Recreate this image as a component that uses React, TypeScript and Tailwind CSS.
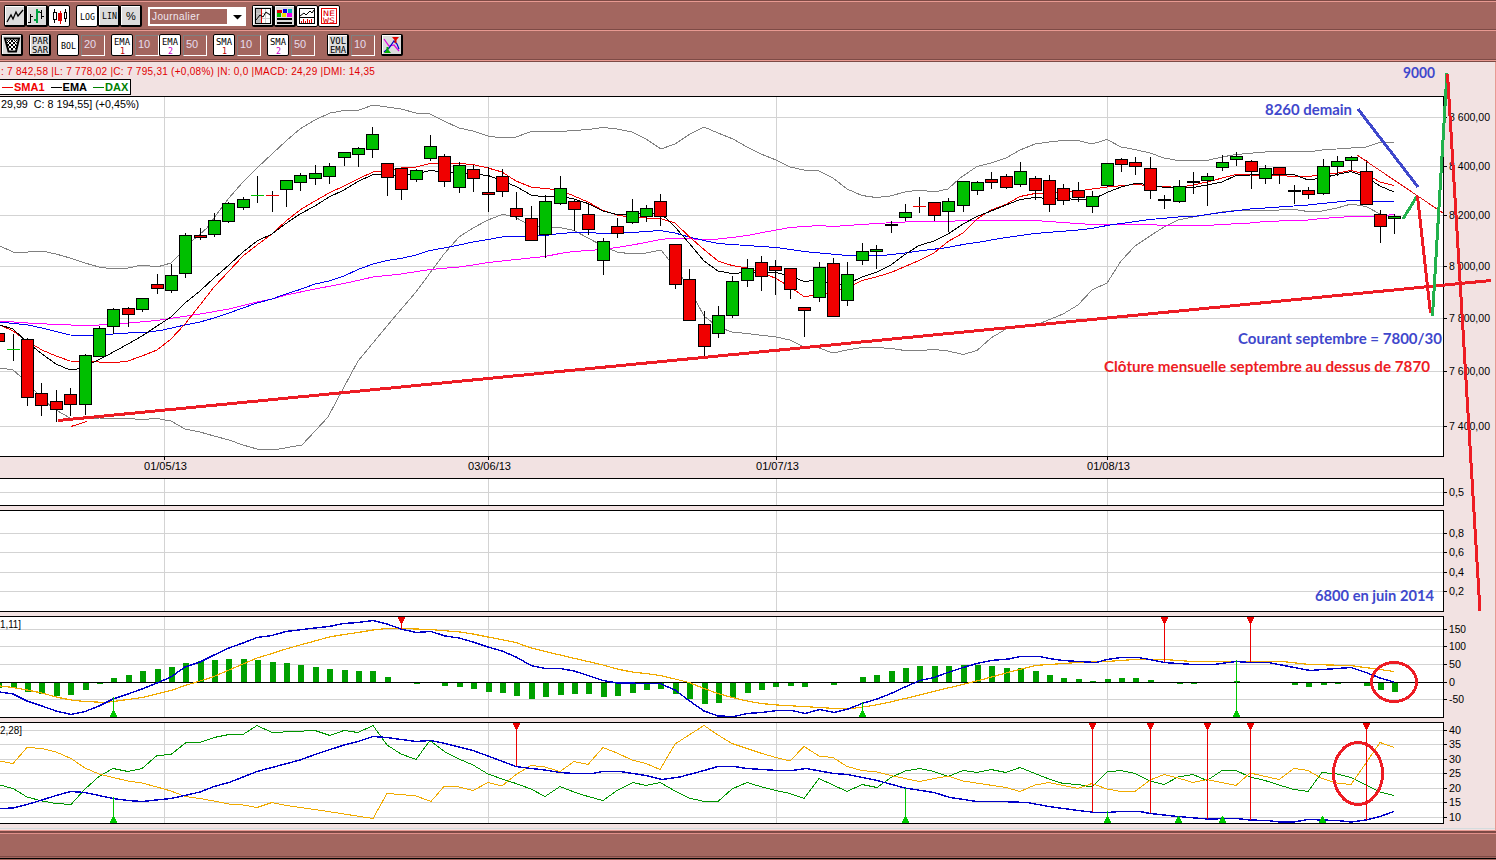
import type { ReactNode } from 'react';

const C = {
  up: '#00bf00',
  down: '#f00000',
  grid: '#d3d3d3',
  bar: '#00a000',
  orange: '#f0aa00',
  blue: '#0000c8',
  green: '#009600',
  marker: '#00c800',
  pen: '#ed1c24',
  ink: '#3f48cc',
  leaf: '#22b14c',
};

const FONT = '"Liberation Sans", Arial, sans-serif';

// x of the n-th trading day
const dayX = (n: number) => Math.floor(13.06 + 14.395 * n);

// one row per day: kind, body top, body bottom, wick high, wick low
// g / r = filled candle, G / R / K = flat cross
type Candle = [string, number, number, number, number];
const candles: Candle[] = [
  ['r', 333, 342, 333, 342], ['G', 349, 350, 334, 361], ['r', 339, 398, 338, 406], ['r', 393, 406, 383, 416],
  ['r', 401, 410, 390, 422], ['r', 394, 405, 388, 416], ['g', 355, 405, 354, 415], ['g', 328, 357, 326, 357],
  ['g', 309, 327, 308, 334], ['r', 308, 315, 307, 327], ['g', 298, 310, 298, 312], ['r', 284, 289, 274, 294],
  ['g', 275, 291, 264, 293], ['g', 235, 274, 233, 278], ['r', 235, 238, 228, 240], ['g', 220, 235, 213, 237],
  ['g', 203, 222, 202, 223], ['g', 199, 208, 197, 210], ['G', 195, 196, 176, 203], ['R', 195, 196, 191, 212],
  ['g', 180, 190, 180, 207], ['g', 175, 183, 173, 191], ['g', 173, 179, 165, 185], ['g', 166, 177, 163, 184],
  ['g', 152, 158, 152, 166], ['g', 148, 155, 147, 167], ['g', 134, 150, 127, 158], ['r', 163, 178, 163, 196],
  ['r', 168, 190, 168, 200], ['g', 170, 180, 169, 182], ['g', 146, 159, 135, 161], ['r', 156, 182, 154, 187],
  ['g', 165, 188, 162, 193], ['r', 169, 179, 165, 192], ['r', 192, 195, 167, 212], ['r', 176, 192, 169, 197],
  ['r', 208, 217, 192, 220], ['r', 218, 241, 206, 241], ['g', 201, 235, 195, 258], ['g', 188, 204, 176, 205],
  ['r', 201, 210, 200, 231], ['r', 214, 230, 204, 235], ['g', 241, 261, 238, 275], ['r', 226, 234, 218, 238],
  ['g', 211, 223, 199, 224], ['g', 208, 217, 205, 222], ['r', 201, 217, 194, 226], ['r', 244, 285, 244, 289],
  ['r', 279, 321, 269, 321], ['r', 324, 347, 311, 357], ['g', 315, 334, 306, 338], ['g', 281, 316, 276, 318],
  ['g', 268, 281, 259, 287], ['r', 262, 277, 256, 291], ['r', 266, 271, 260, 295], ['r', 268, 290, 268, 299],
  ['r', 307, 311, 307, 337], ['g', 267, 298, 262, 302], ['r', 263, 317, 258, 317], ['g', 274, 301, 262, 306],
  ['g', 251, 261, 243, 265], ['g', 249, 252, 245, 269], ['K', 224, 226, 221, 233], ['g', 212, 218, 204, 221],
  ['R', 206, 207, 197, 213], ['r', 202, 216, 202, 221], ['g', 201, 212, 198, 232], ['g', 181, 206, 181, 212],
  ['g', 182, 191, 181, 195], ['r', 179, 183, 172, 189], ['r', 176, 188, 174, 189], ['g', 171, 185, 162, 187],
  ['r', 178, 191, 176, 200], ['r', 180, 205, 175, 212], ['r', 188, 201, 184, 205], ['r', 190, 198, 182, 202],
  ['g', 196, 207, 191, 213], ['g', 163, 186, 163, 187], ['r', 159, 165, 158, 172], ['r', 162, 167, 157, 175],
  ['r', 168, 191, 157, 199], ['K', 199, 201, 195, 209], ['g', 186, 202, 180, 203], ['K', 181, 183, 172, 194],
  ['g', 176, 181, 173, 206], ['g', 162, 168, 155, 171], ['g', 156, 160, 152, 166], ['r', 161, 172, 160, 189],
  ['g', 168, 179, 165, 184], ['r', 167, 175, 167, 184], ['K', 190, 192, 185, 204], ['r', 190, 195, 187, 199],
  ['g', 166, 194, 159, 195], ['g', 161, 167, 156, 176], ['g', 157, 161, 156, 170], ['r', 171, 205, 160, 205],
  ['r', 214, 227, 210, 243], ['g', 216, 219, 214, 234],
];

const upperBand = '0,246 13,252 28,252 42,251 56,254 70,258 85,263 99,267 113,269 128,268 142,265 157,267 171,263 180,254 192,241 207,228 214,218 229,198 243,182 257,168 272,154 286,141 300,129 315,120 330,113 344,110.5 358,110.5 373,105 387,107 401,109 416,113 430,114 444,121 459,128 473,131 488,136 502,138 516,137 531,131.5 560,131.5 588,129.5 603,127.5 617,129 632,132 646,139 661,149 675,144 690,134 704,127 718,133 733,139 747,147 761,154 776,160 790,167 804,170 819,171 833,178 847,189 862,195.5 876,197.5 890,196 905,192 919,190 934,192 948,189 960,178 977,166.5 991,163 1006,158 1020,150 1035,144 1049,142 1063,140.5 1078,140.5 1092,144 1107,139.5 1121,147 1135,149.5 1150,153 1164,158 1178,160.5 1207,160.5 1222,157 1236,154.5 1265,152 1294,151 1308,152 1322,150 1366,147 1380,142.5 1394,142.5';
const lowerBand = '0,368 13,370 27,382 42,399 56,410 70,418 85,419 99,418 128,418.5 142,419.5 157,418.5 171,421 185,429 200,432 214,436 229,440 243,445 257,449 279,449 302,445 316,430 328,417 344,387 358,361 392,320 416,292 430,273 444,254 459,237 473,228 488,220 502,214.5 513,216 531,226 545,227.5 560,227.5 574,230.5 588,238 603,246 617,252 632,254 646,253 661,250 669,260 682,277 697,303 704,316 718,327 732,332 747,333.5 776,337 790,340 804,347 819,348 833,353 847,350 862,347.5 876,347.5 891,348.5 905,350.5 920,350.5 934,349.5 948,351 963,354.5 977,350.5 991,338 1006,329 1020,327 1041,323 1063,314 1078,305 1092,290 1107,283 1121,261 1135,246 1150,236 1164,227 1178,220 1193,217 1222,212 1236,210.5 1265,210.5 1294,209.5 1308,211.5 1322,211 1337,208 1351,204 1366,206.5 1380,214';
const ema50 = '0,322 28,325 42,328 70,335 100,335.5 113,334 128,333 149,332 163,330 185,325 200,322 214,318 229,313 257,303 272,299 286,294 300,289.5 315,284 329,281 344,276 358,269.5 373,264 387,260.5 401,258.5 416,255 430,250.5 444,248 459,245 473,242 488,239.5 502,237 516,236.5 530,236.5 545,235.5 560,233.5 574,232.5 588,232.5 603,233.5 632,232.5 646,231.5 660,230.5 675,233 689,237 704,240.5 718,243.5 732,244.5 776,247.5 804,251.5 847,255.5 882,255.5 905,253 919,251 948,247.5 963,244.5 977,242.5 1006,237.5 1035,233.5 1078,230 1092,228.5 1107,225.5 1121,223.5 1150,219.5 1178,217 1193,216.5 1222,212.5 1250,209 1265,208 1308,205 1322,203.5 1337,202 1351,200.5 1366,200.5 1380,201.5 1394,201.5';
const sma50 = '0,321 28,323 56,324.5 85,325.5 113,324.5 157,320.5 200,314 229,309 257,302 272,299 286,295 315,289 344,283.5 373,277 401,274 430,269.5 459,267 473,265 488,262.5 516,259.5 545,256.5 560,253.5 574,251.5 588,250.5 603,249.5 617,247.5 632,245 646,242.5 660,239.5 675,238 704,239.5 718,239 732,237.5 747,235.5 776,230 790,227.5 819,225.5 833,226.5 847,225.5 862,224.5 876,223.5 905,222 919,221.5 948,221.5 963,220.5 1035,220.5 1063,222.5 1092,224.5 1150,224.5 1164,225.5 1207,225.5 1222,224.5 1250,223 1265,221.5 1308,220 1322,218.5 1351,216.5 1375,216.5 1384,215.5 1394,214.5';
const ema10 = '0,325 13,329 27,342 42,354 56,364 70,370 77,369 92,363 106,356 128,344 142,336 157,326 171,317 185,303 200,291 214,278 229,265 243,252 257,241 272,234 286,223.5 300,214 315,206 329,197 344,190 358,181.5 373,174.5 387,174.5 401,176 416,174 430,170.5 444,172 459,173 473,174 488,175.5 495,178 516,186.5 531,195 545,197 560,196 574,199 588,203.5 603,211 617,214.5 646,213.5 660,213.5 667,219 675,227 689,243 704,261 718,271 732,273.5 747,272.5 776,272.5 790,276 804,281.5 819,280 833,284 847,284 862,277 876,272.5 891,265 905,254.5 919,245.5 934,241 948,234 963,224 977,216.5 991,211 1006,205 1020,199.5 1035,197.5 1049,198.5 1092,199.5 1107,192.5 1121,187 1135,183.5 1150,184.5 1164,187.5 1193,187.5 1207,185 1222,182 1236,175.5 1265,174.5 1294,174.5 1308,180 1322,178 1337,174.5 1351,171.5 1366,177 1380,186 1394,192';
const sma10 = '0,325 13,331 27,341 42,350 56,356 70,361 92,361.5 113,363 128,361 142,356 157,350 171,339 185,324 200,305 214,287 229,271 243,256 257,245 272,234 286,221 300,210 315,201 329,193 344,186 358,179 373,172 387,171 401,168 416,167 430,163.5 459,163.5 473,164.5 488,168 502,172 516,181 531,187 545,188.5 560,190 574,196 588,202 603,210.5 617,215 632,217.5 660,218.5 675,223 689,236.5 704,249.5 718,261 732,265.5 747,268 761,272 776,278.5 790,287 804,296.5 819,295 833,292 847,288 862,280.5 876,277 891,272.5 905,266.5 919,260.5 934,253 948,241.5 963,233 977,219 991,210 1006,204.5 1020,196.5 1035,193.5 1049,193 1078,191 1107,187 1135,184.5 1178,187.5 1193,185 1207,182 1236,174.5 1265,175.5 1308,176.5 1337,173 1351,170.5 1366,174 1380,182 1394,185.5';

const macdLine = '0,692 13,694 27,701 42,706 56,711 71,714.5 85,711.5 99,706 113,699 128,694 142,689 157,683 171,677 185,667 200,662 214,655 229,648 243,643 257,637.5 272,635.5 286,631.5 315,628 329,626.5 344,623.5 358,622.5 373,620.5 387,624 401,629 416,632.5 431,631.5 445,636 459,638 473,642 488,647 502,651 516,657 531,665.5 545,668.5 560,668.5 574,671 588,675.5 603,680.5 617,683 660,683.5 675,690 689,700.5 704,711 718,716 734,716.5 747,713.5 762,712.5 777,710.5 792,710.5 805,713.5 820,709.5 834,712.5 848,709 862,703.5 877,699 891,693.5 905,687 920,680.5 934,677.5 948,672.5 963,667.5 977,663.5 991,660.5 1009,659 1020,656.5 1040,656.5 1049,658.5 1063,660.5 1078,661.5 1096,662.5 1107,659.5 1121,657.5 1138,657.5 1150,659.5 1164,662.5 1178,663.5 1193,664.5 1214,664.5 1236,661.5 1250,662.5 1268,662.5 1279,664.5 1294,667.5 1310,670.5 1337,668.5 1351,667.5 1366,672.5 1380,678 1394,682';
const macdSignal = '0,686 13,687.5 27,690 42,693 56,697 71,700 85,701.5 106,702.5 128,699.5 142,697.5 157,694 171,690.5 185,685.5 200,681 214,676.5 229,670 243,664 257,658 272,653.5 286,649 300,645 315,641 329,637 344,634.5 358,632.5 373,630 387,628.5 401,628.5 430,629.5 460,632 473,634 488,637 516,642.5 531,648 545,651.5 560,655 588,661.5 603,665 617,669 632,672 646,673.5 660,675.5 675,679 689,682.5 704,688.5 718,693.5 732,697.5 747,701 761,703.5 777,705 820,707.5 834,708.5 852,708.5 870,706 891,702 905,698.5 920,695 948,688 977,681 1006,673 1020,669.5 1035,665.5 1049,664.5 1078,662.5 1107,661.5 1135,659.5 1164,659.5 1193,661.5 1282,661.5 1310,664.5 1350,665.5 1380,669.5 1394,671.5';
const diPlus = '0,785 13,788.5 27,797 42,801 56,803.5 71,804.5 85,789 99,776.5 113,768.5 128,771.5 142,768.5 157,755.5 171,754.5 186,742.5 200,742.5 214,737.5 229,734.5 243,734.5 257,725.5 272,732.5 315,730.5 330,735.5 344,730.5 358,732.5 373,725.5 387,745 401,754 416,759.5 430,740.5 445,752 459,759 473,765 488,774 502,779 516,783.5 531,789 545,796.5 560,786.5 574,792 588,796.5 603,800.5 617,790.5 633,782.5 646,785.5 660,782.5 675,791 689,798 704,801.5 718,801.5 732,789 747,782.5 762,787 776,790.5 790,793.5 804,798.5 819,778.5 833,785 847,791.5 862,784.5 877,787.5 891,777.5 905,771 920,768.5 934,771.5 948,776.5 963,770.5 977,772.5 991,769.5 1006,772.5 1020,767.5 1035,773.5 1049,779 1063,783.5 1078,784.5 1092,787 1107,772 1121,770.5 1135,773.5 1150,781 1164,784.5 1178,777 1193,774.5 1207,780.5 1222,770.5 1236,770.5 1250,777 1265,780.5 1279,785 1294,789.5 1308,791.5 1322,772.5 1337,774 1351,777.5 1366,785 1380,792 1394,795.5';
const diMinus = '0,761 13,763.5 27,747.5 42,748.5 56,752 71,758.5 85,768 99,774 113,777.5 128,781 142,783 157,787 171,791 185,796.5 200,798.5 214,801 229,804 243,805 257,807.5 272,802.5 286,805.5 315,809.5 344,814 373,818.5 387,793.5 401,794.5 416,796 431,801.5 444,786.5 459,787 473,790.5 488,782.5 502,786 516,774.5 531,765.5 545,767 560,771.5 574,761.5 588,764.5 603,747.5 617,753 632,760 646,763.5 660,769.5 675,744 689,735 704,725.5 718,735 732,743.5 762,753.5 776,757.5 790,761 804,746.5 819,756 833,757.5 847,766.5 862,770.5 877,772 891,775.5 919,781.5 948,776 963,781 1006,787.5 1020,791.5 1035,785 1049,782.5 1078,788.5 1092,783.5 1107,789 1121,791.5 1135,791.5 1150,780 1164,774.5 1178,778 1193,782.5 1207,779.5 1236,785.5 1250,773 1279,779.5 1294,768.5 1308,770.5 1322,778.5 1337,783 1351,784.5 1366,763 1380,742.5 1394,747.5';
const adx = '0,808.5 13,808 27,804.5 42,800 56,795.5 71,791.5 85,792.5 113,798.5 128,800.5 142,801.5 171,798.5 200,792 214,786.5 229,782.5 257,771.5 272,767.5 300,760 315,754.5 344,745 358,741.5 373,736.5 387,737.5 416,741.5 431,740.5 445,743.5 459,747 473,750.5 488,756 516,766.5 531,768.5 545,770 560,772.5 574,773.5 593,773.5 603,771.5 620,771.5 646,775.5 662,779.5 680,777 704,770.5 718,766.5 734,766.5 747,768.5 777,770.5 792,770.5 806,768.5 834,773.5 848,774.5 877,780.5 905,788 934,792.5 950,797.5 977,801.5 1000,801.5 1027,802.5 1049,806.5 1078,810.5 1096,812.5 1107,812.5 1120,811.5 1140,811.5 1150,813.5 1178,816.5 1207,819 1236,818.5 1250,820 1268,820.5 1279,822 1294,822 1308,819.5 1322,820 1337,820.5 1351,822 1366,820 1380,816.5 1394,811.5';

// histogram ends, starting one day before the first full column, 0 = nothing drawn
const histogram = [
  688, 688, 692, 694, 696, 695, 690, 684, 678, 675, 671, 669, 667, 663, 661, 660, 659, 659, 660, 662,
  663, 665, 667, 669, 670, 671, 671, 677, 0, 684, 0, 686, 687, 689, 692, 693, 696, 699, 697, 695,
  694, 694, 697, 696, 693, 690, 689, 694, 699, 704, 703, 698, 693, 690, 687, 686, 687, 0, 685, 0,
  677, 675, 671, 668, 666, 666, 666, 665, 665, 666, 668, 668, 671, 675, 678, 679, 681, 679, 678, 678,
  680, 0, 684, 684, 0, 0, 681, 0, 0, 0, 685, 687, 685, 684, 0, 686, 690, 692,
];

const panels = [
  { top: 96, bottom: 456, ticks: [[117, '8 600,00'], [166, '8 400,00'], [215, '8 200,00'], [266, '8 000,00'], [318, '7 800,00'], [371, '7 600,00'], [426, '7 400,00']] },
  { top: 478, bottom: 505, ticks: [[492, '0,5']] },
  { top: 510, bottom: 611, ticks: [[533, '0,8'], [552, '0,6'], [572, '0,4'], [591, '0,2']] },
  { top: 616, bottom: 717, ticks: [[629, '150'], [646, '100'], [664, '50'], [682, '0'], [699, '-50']] },
  { top: 722, bottom: 823, ticks: [[730, '40'], [744, '35'], [759, '30'], [773, '25'], [788, '20'], [802, '15'], [817, '10']] },
] as { top: number; bottom: number; ticks: [number, string][] }[];

const months: [number, string][] = [[164, '01/05/13'], [488, '03/06/13'], [776, '01/07/13'], [1107, '01/08/13']];

function tickWidth(label: string) {
  if (label.length === 8) return 41;
  if (label.length === 3) return label.includes(',') || label.includes('-') ? 15 : 17;
  return label.length * 6;
}

function Line({ points, color, width = 1 }: { points: string; color: string; width?: number }) {
  return <polyline points={points} fill="none" stroke={color} strokeWidth={width} shapeRendering="crispEdges" />;
}

function Label({ x, y, width, children }: { x: number; y: number; width: number; children: string }) {
  return (
    <text x={x} y={y} fontSize="10" textLength={width} lengthAdjust="spacingAndGlyphs">
      {children}
    </text>
  );
}

function Panel({ top, bottom, ticks }: { top: number; bottom: number; ticks: [number, string][] }) {
  return (
    <g shapeRendering="crispEdges">
      <rect x="-2" y={top + 0.5} width="1445.5" height={bottom - top} fill="#fff" />
      {months.map(([x]) => <rect key={x} x={x} y={top} width="1" height={bottom - top} fill={C.grid} />)}
      {ticks.map(([y, label]) => (
        <g key={label}>
          <rect x="0" y={y} width="1443" height="1" fill={C.grid} />
          <rect x="1444" y={y} width="3" height="1" fill="#000" />
          <Label x={1449} y={y + 4} width={tickWidth(label)}>{label}</Label>
        </g>
      ))}
      <rect x="-2.5" y={top + 0.5} width="1446" height={bottom - top} fill="none" stroke="#000" />
    </g>
  );
}

function CandleShape({ x, data }: { x: number; data: Candle }) {
  const [kind, top, bottom, high, low] = data;
  const flat = kind === 'G' || kind === 'R' || kind === 'K';
  const color = { g: C.up, G: C.up, r: C.down, R: C.down, K: '#000' }[kind];
  return (
    <g shapeRendering="crispEdges">
      <rect x={x} y={high} width="1" height={low - high} fill="#000" />
      {flat ? (
        <rect x={x - 6} y={top} width="13" height={bottom - top} fill={color} />
      ) : (
        <>
          <rect x={x - 6} y={top} width="13" height={bottom - top} fill="#000" />
          <rect x={x - 5} y={top + 1} width="11" height={Math.max(bottom - top - 2, 1)} fill={color} />
        </>
      )}
    </g>
  );
}

function Sell({ x, top, to }: { x: number; top: number; to: number }) {
  return (
    <g fill="#eb0000" shapeRendering="crispEdges">
      <rect x={x} y={top} width="1" height={to - top} />
      <rect x={x - 3} y={top} width="7" height="2" />
      <rect x={x - 2} y={top + 2} width="5" height="2" />
      <rect x={x - 1} y={top + 4} width="3" height="2" />
    </g>
  );
}

function Buy({ x, bottom, from }: { x: number; bottom: number; from: number }) {
  return (
    <g fill={C.marker} shapeRendering="crispEdges">
      <rect x={x} y={from} width="1" height={bottom - from} />
      <rect x={x - 3} y={bottom - 2} width="7" height="2" />
      <rect x={x - 2} y={bottom - 4} width="5" height="2" />
      <rect x={x - 1} y={bottom - 6} width="3" height="2" />
    </g>
  );
}

function Note({ x, y, width, color, children }: { x: number; y: number; width: number; color: string; children: string }) {
  return (
    <text x={x} y={y} fill={color} fontSize="14.5" fontWeight="700" fontFamily="Lato, 'Open Sans', sans-serif" textLength={width} lengthAdjust="spacingAndGlyphs">
      {children}
    </text>
  );
}

function Chart() {
  return (
    <svg width="1496" height="731" viewBox="0 96 1496 731" className="block overflow-visible" fontFamily={FONT}>
      {panels.map((p) => <Panel key={p.top} {...p} />)}
      {months.map(([x, label]) => (
        <g key={x}>
          <rect x={x} y="457" width="1" height="3" fill="#000" />
          <Label x={x - 20} y={470} width={43}>{label}</Label>
        </g>
      ))}

      {/* price */}
      <Line points={upperBand} color="#808080" />
      <Line points={lowerBand} color="#808080" />
      <Line points={sma50} color="#ff00ff" />
      <Line points={ema50} color="#0000f0" />
      <Line points={sma10} color="#f00000" />
      <Line points={ema10} color="#000" />
      {candles.map((c, i) => <CandleShape key={i} x={dayX(i - 1)} data={c} />)}
      <Label x={1} y={108} width={138}>{'29,99\u00a0 C: 8 194,55] (+0,45%)'}</Label>

      {/* MACD */}
      {histogram.map((y, i) => y > 0 && (
        <rect key={i} x={dayX(i - 1) - 2} y={Math.min(y, 682)} width="6" height={Math.abs(y - 682)} fill={C.bar} />
      ))}
      <rect x="0" y="682" width="1443" height="1" fill="#000" />
      <Line points={macdSignal} color={C.orange} width={1.2} />
      <Line points={macdLine} color={C.blue} width={1.4} />
      <Sell x={401} top={617} to={629} />
      <Sell x={1164} top={617} to={662} />
      <Sell x={1250} top={617} to={662} />
      <Buy x={113} bottom={717} from={697} />
      <Buy x={862} bottom={717} from={702} />
      <Buy x={1236} bottom={717} from={660} />
      <Label x={0} y={628} width={21}>1,11]</Label>

      {/* DMI */}
      <Line points={diPlus} color={C.green} />
      <Line points={diMinus} color={C.orange} />
      <Line points={adx} color={C.blue} width={1.4} />
      {[[516, 766], [1092, 812], [1150, 813], [1207, 819], [1250, 820], [1366, 820]].map(([x, to]) => <Sell key={x} x={x} top={723} to={to} />)}
      {[[113, 797], [905, 788], [1107, 811], [1178, 816], [1222, 816], [1322, 816]].map(([x, from]) => <Buy key={x} x={x} bottom={823} from={from} />)}
      <Label x={0} y={734} width={22}>2,28]</Label>

      {/* hand-drawn notes */}
      <g fill="none" shapeRendering="crispEdges">
        <path d="M71 426.5L87 421.5" stroke={C.down} />
        <path d="M1357 155L1443 213" stroke="#e01010" />
        <path d="M58 420.5L1491 280.5" stroke={C.pen} strokeWidth="3" />
        <path d="M1358 109L1418 187" stroke={C.ink} strokeWidth="3" />
        <path d="M1403 219L1416.500 197" stroke={C.leaf} strokeWidth="3" />
        <path d="M1417.500 196L1430.500 313" stroke={C.pen} strokeWidth="3" />
        <path d="M1432.500 316L1447 73" stroke={C.leaf} strokeWidth="3" />
        <path d="M1447.500 74L1480 611" stroke={C.pen} strokeWidth="3" />
        <ellipse cx="1394" cy="682" rx="22.500" ry="19.500" stroke={C.pen} strokeWidth="3" />
        <ellipse cx="1358" cy="773.500" rx="24.500" ry="31" stroke={C.pen} strokeWidth="3" />
      </g>
      <Note x={1403} y={77.5} width={32} color={C.ink}>9000</Note>
      <Note x={1265} y={114.5} width={87} color={C.ink}>8260 demain</Note>
      <Note x={1238} y={343.5} width={204} color={C.ink}>Courant septembre = 7800/30</Note>
      <Note x={1104} y={371.5} width={326} color={C.pen}>Clôture mensuelle septembre au dessus de 7870</Note>
      <Note x={1315} y={600.5} width={119} color={C.ink}>6800 en juin 2014</Note>
    </svg>
  );
}

function Tool({ active = false, children }: { active?: boolean; children: ReactNode }) {
  return (
    <button className={`h-[22px] w-[22px] shrink-0 rounded-[2px] border border-black p-0 ${active ? 'bg-white' : 'border-r-2 border-b-2 bg-[#dcdcdc]'}`}>
      <svg width="22" height="22" viewBox="0 0 22 22" className="-mt-px -ml-px block overflow-visible" fill="none">
        {!active && <path d="M1.500 20V1.500H20" stroke="#fff" shapeRendering="crispEdges" />}
        {children}
      </svg>
    </button>
  );
}

function Glyphs({ x = 4, y, width = 15, size = 9.5, color = '#000', children }: { x?: number; y: number; width?: number; size?: number; color?: string; children: string }) {
  return (
    <text x={x} y={y} fill={color} fontSize={size} fontFamily='"DejaVu Sans Mono", monospace' textLength={width} lengthAdjust="spacingAndGlyphs">
      {children}
    </text>
  );
}

function Average({ name, n, color, value }: { name: string; n: string; color: string; value: string }) {
  return (
    <div className="flex items-center gap-[2px]">
      <Tool active>
        <Glyphs x={3} y={11} width={16}>{name}</Glyphs>
        <Glyphs x={9} y={19.5} width={5} size={8.5} color={color}>{n}</Glyphs>
      </Tool>
      <Period value={value} />
    </div>
  );
}

function Period({ value }: { value: string }) {
  return (
    <div className="h-[21px] w-6 border border-t-[#808080] border-r-white border-b-white border-l-[#808080] pl-[2px] text-[11px] leading-[17px] text-[#e6dcec]">
      {value}
    </div>
  );
}

function Toolbar() {
  return (
    <header className="bg-[#a3665f]">
      <div className="h-[2px] border-t border-[#7d4a45] bg-[#e89a92]" />
      <div className="flex h-[27px] items-start pt-[3px] pl-1">
        <Tool>
          <path d="M3 17L7 10L9 14L12 7L14 11L19 5" stroke="#000" strokeWidth="1.300" />
        </Tool>
        <Tool>
          <g shapeRendering="crispEdges">
            <path d="M4.500 9V18M2 17.500H5M4 11.500H7M15.500 5V14M13 7.500H15M16 11.500H18" stroke="#000" />
            <path d="M10.500 4V18M8 14.500H10M11 6.500H14" stroke="#00a040" strokeWidth="2" />
          </g>
        </Tool>
        <Tool active>
          <g shapeRendering="crispEdges">
            <path d="M6.500 4V18M17.500 4V17" stroke="#000" />
            <rect x="5.500" y="7.500" width="3" height="7" fill="#fff" stroke="#000" />
            <rect x="16.500" y="7.500" width="2" height="6" fill="#fff" stroke="#000" />
            <path d="M12 6V19" stroke="#e00000" />
            <rect x="10" y="8" width="4" height="8" fill="#e00000" />
          </g>
        </Tool>
        <div className="w-[6px]" />
        <Tool active><Glyphs y={15}>LOG</Glyphs></Tool>
        <Tool><Glyphs y={14}>LIN</Glyphs></Tool>
        <Tool>
          <text x="6" y="15" fill="#000" fontSize="11" fontFamily={FONT}>%</text>
        </Tool>
        <div className="mt-[2px] ml-[6px] flex h-[19px] w-[98px] items-stretch border-2 border-white bg-white">
          <span className="w-[77px] bg-[#a3665f] pl-[2px] text-[10px] leading-[15px] tracking-[0.4px] text-[#f0e6f0]">Journalier</span>
          <svg width="17" height="15" viewBox="0 0 17 15"><path d="M6 6H15L10.500 10.500Z" fill="#000" /></svg>
        </div>
        <div className="w-[6px]" />
        <Tool>
          <g shapeRendering="crispEdges">
            <rect x="3.500" y="3.500" width="15" height="15" fill="#fff" stroke="#000" />
            <rect x="4" y="4" width="5" height="14" fill="#bbb" />
            <path d="M4 8.500H18M4 13.500H18M13.500 4V18" stroke="#ccc" />
            <path d="M9.500 4V18" stroke="#e00000" />
          </g>
          <path d="M4 15L8 10L11 12L14 7L18 10" stroke="#000" />
        </Tool>
        <Tool>
          <g shapeRendering="crispEdges">
            <path d="M3 5H8V8H3Z" fill="#e00000" />
            <path d="M9 4H13V8H9Z" fill="#0000e0" />
            <path d="M14 4H18V8H14Z" fill="#00b0b0" />
            <path d="M3 8H7V12H3Z" fill="#00c000" />
            <path d="M8 8H12V12H8Z" fill="#f0e000" />
            <path d="M13 8H18V12H13Z" fill="#f000f0" />
            <path d="M3 14H18M3 18H18" stroke="#000" strokeWidth="2" />
          </g>
        </Tool>
        <Tool active>
          <rect x="3.500" y="3.500" width="15" height="15" stroke="#000" shapeRendering="crispEdges" />
          <path d="M4 11L8 8L10 10L14 6L16 8L18 5" stroke="#000" />
          <path d="M4 12.500H18" stroke="#000" shapeRendering="crispEdges" />
          <path d="M5.500 18V16M7.500 18V14M9.500 18V16M11.500 18V14M13.500 18V15M15.500 18V14" stroke="#e00000" shapeRendering="crispEdges" />
        </Tool>
        <Tool active>
          <rect x="3.500" y="3.500" width="15" height="15" stroke="#e00000" shapeRendering="crispEdges" />
          <Glyphs x={5} y={10.5} width={12} size={7.5} color="#e00000">NE</Glyphs>
          <Glyphs x={5} y={17.5} width={12} size={7.5} color="#e00000">WS</Glyphs>
        </Tool>
      </div>
      <div className="h-[2px] border-t border-[#7d4a45] bg-[#e89a92]" />
      <div className="flex h-7 items-start pt-[3px] pl-px">
        <Tool>
          <path d="M4 4.500H18L15 17.500H7.500Z" fill="#fff" stroke="#000" strokeWidth="2" />
          <path d="M6 6L15 15M9 5L16 12M12 5L16 9M6 10L12 16M16 6L7 15M13 5L6 12M10 5L6 9M15 11L10 16" stroke="#000" />
        </Tool>
        <div className="w-[6px]" />
        <Tool>
          <Glyphs x={3} y={10} width={16} size={8.5}>PAR</Glyphs>
          <Glyphs x={3} y={19} width={16} size={8.5}>SAR</Glyphs>
        </Tool>
        <div className="w-[6px]" />
        <div className="flex items-center gap-[2px]">
          <Tool active><Glyphs y={15}>BOL</Glyphs></Tool>
          <Period value="20" />
        </div>
        <div className="w-[6px]" />
        <Average name="EMA" n="1" color="#c00000" value="10" />
        <Average name="EMA" n="2" color="#c800c8" value="50" />
        <div className="w-[6px]" />
        <Average name="SMA" n="1" color="#c00000" value="10" />
        <div className="w-[6px]" />
        <Average name="SMA" n="2" color="#c800c8" value="50" />
        <div className="w-3" />
        <div className="flex items-center gap-[2px]">
          <Tool>
            <Glyphs x={3} y={10} width={16} size={8.5}>VOL</Glyphs>
            <Glyphs x={3} y={19} width={16} size={8.5}>EMA</Glyphs>
          </Tool>
          <Period value="10" />
        </div>
        <div className="w-[6px]" />
        <Tool>
          <path d="M3 5L8 12L13 11L18 17" stroke="#e000e0" strokeWidth="1.200" />
          <path d="M3 18L8 14L13 7L16 10L18 15" stroke="#0000c8" strokeWidth="1.200" />
          <path d="M11 3H18L15.500 6V9H13.500V6Z" fill="#e00000" />
          <path d="M3 19H10L7.500 16V13H5.500V16Z" fill="#00b000" />
        </Tool>
      </div>
      <div className="h-[3px] border-y border-[#7d4a45] bg-[#e89a92]" />
    </header>
  );
}

function Legend() {
  const items = [
    ['SMA1', 'bg-[#f00000]', 'text-[#f00000]'],
    ['EMA', 'bg-black', 'text-black'],
    ['DAX', 'bg-[#008000]', 'text-[#008000]'],
  ];
  return (
    <div className="flex h-4 w-[131px] items-center gap-[6px] border border-l-0 border-black bg-white pl-[2px]">
      {items.map(([name, line, text]) => (
        <span key={name} className={`flex items-center gap-px text-[11px] leading-none font-bold ${text}`}>
          <i className={`h-px w-[11px] ${line}`} />
          {name}
        </span>
      ))}
    </div>
  );
}

export default function App() {
  return (
    <div className="flex h-[860px] w-[1496px] flex-col overflow-hidden bg-[#a3665f] font-['Liberation_Sans',Arial,sans-serif]">
      <Toolbar />
      <main className="h-[768px] border-r border-[#e89a92] bg-[#f2e2e2]">
        <div className="h-[34px]">
          <p className="h-[17px] pt-[4px] pl-px text-[10px] leading-[12px] tracking-[0.28px] whitespace-pre text-[#e00000]">
            : 7 842,58 |L: 7 778,02 |C: 7 795,31 (+0,08%) |N: 0,0 |MACD: 24,29 |DMI: 14,35
          </p>
          <Legend />
        </div>
        <Chart />
        <div className="mt-px h-px bg-[#d4dcde]" />
      </main>
      <footer>
        <div className="h-px bg-[#e89a92]" />
        <div className="h-[2px] bg-[#7d4a45]" />
        <div className="h-px bg-[#e0908a]" />
        <div className="h-[22px]" />
        <div className="h-px bg-[#7d4a45]" />
        <div className="h-px" />
        <div className="h-px bg-black" />
      </footer>
    </div>
  );
}
